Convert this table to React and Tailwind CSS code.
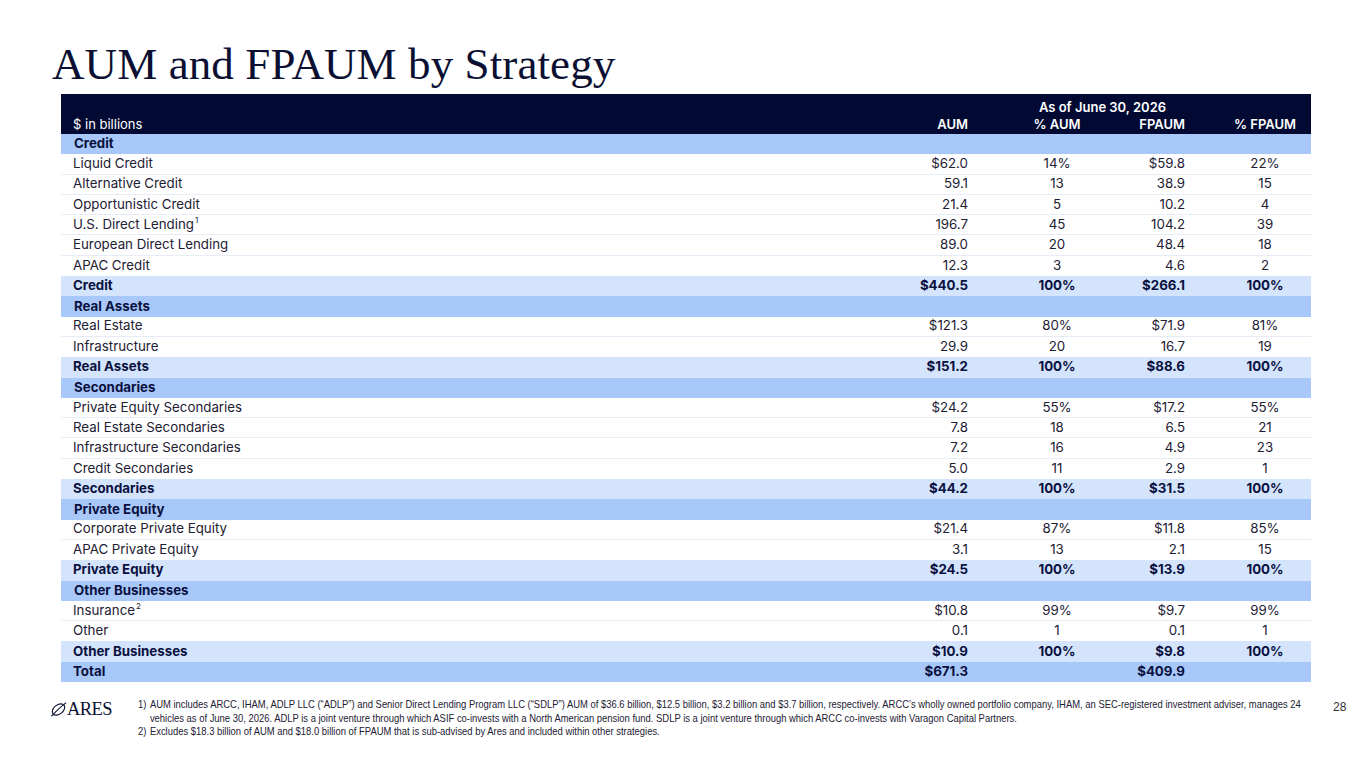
import React from "react";

const sections = [
  {
    name: "Credit",
    rows: [
      ["Liquid Credit", "$62.0", "14%", "$59.8", "22%"],
      ["Alternative Credit", "59.1", "13", "38.9", "15"],
      ["Opportunistic Credit", "21.4", "5", "10.2", "4"],
      ["U.S. Direct Lending", "196.7", "45", "104.2", "39", "1"],
      ["European Direct Lending", "89.0", "20", "48.4", "18"],
      ["APAC Credit", "12.3", "3", "4.6", "2"],
    ],
    total: ["Credit", "$440.5", "100%", "$266.1", "100%"],
  },
  {
    name: "Real Assets",
    rows: [
      ["Real Estate", "$121.3", "80%", "$71.9", "81%"],
      ["Infrastructure", "29.9", "20", "16.7", "19"],
    ],
    total: ["Real Assets", "$151.2", "100%", "$88.6", "100%"],
  },
  {
    name: "Secondaries",
    rows: [
      ["Private Equity Secondaries", "$24.2", "55%", "$17.2", "55%"],
      ["Real Estate Secondaries", "7.8", "18", "6.5", "21"],
      ["Infrastructure Secondaries", "7.2", "16", "4.9", "23"],
      ["Credit Secondaries", "5.0", "11", "2.9", "1"],
    ],
    total: ["Secondaries", "$44.2", "100%", "$31.5", "100%"],
  },
  {
    name: "Private Equity",
    rows: [
      ["Corporate Private Equity", "$21.4", "87%", "$11.8", "85%"],
      ["APAC Private Equity", "3.1", "13", "2.1", "15"],
    ],
    total: ["Private Equity", "$24.5", "100%", "$13.9", "100%"],
  },
  {
    name: "Other Businesses",
    rows: [
      ["Insurance", "$10.8", "99%", "$9.7", "99%", "2"],
      ["Other", "0.1", "1", "0.1", "1"],
    ],
    total: ["Other Businesses", "$10.9", "100%", "$9.8", "100%"],
  },
];

function Cells({ r, bold }) {
  return (
    <>
      <div className={`flex-1 ${bold ? "font-bold text-[#0a1140]" : "text-[#1d2033]"}`}>
        {r[0]}
        {r[5] && <sup className="text-[8px] ml-[1px] -top-[0.7em]">{r[5]}</sup>}
      </div>
      <div className="w-[68px] text-right">{r[1]}</div>
      <div className="w-[42px]" />
      <div className="w-[94px] text-center">{r[2]}</div>
      <div className="w-[81px] text-right">{r[3]}</div>
      <div className="w-[40px]" />
      <div className="w-[80px] text-center">{r[4]}</div>
    </>
  );
}

function AresLogo() {
  return (
    <div className="flex items-center text-[#0b1033]">
      <svg width="17" height="15" viewBox="0 0 17 15">
        <ellipse cx="8.5" cy="7.5" rx="7" ry="4.6" transform="rotate(-38 8.5 7.5)" fill="none" stroke="#0b1033" strokeWidth="1.1" />
        <path d="M1.2 14.2 C 5 10.5, 9.5 5.5, 16.2 0.6" fill="none" stroke="#0b1033" strokeWidth="1.1" />
      </svg>
      <span className="text-[18.5px] leading-none tracking-[-0.6px]" style={{ fontFamily: "'Liberation Serif', serif" }}>
        ARES
      </span>
    </div>
  );
}

export default function App() {
  return (
    <div
      className="w-[1365px] h-[768px] bg-white relative overflow-hidden"
      style={{ fontFamily: "Inter, 'Liberation Sans', sans-serif" }}
    >
      <h1
        className="absolute left-[52px] top-[35px] text-[45px] leading-[58px] text-[#0b1033] tracking-[0.1px]"
        style={{ fontFamily: "'Liberation Serif', 'DejaVu Serif', serif" }}
      >
        AUM and FPAUM by Strategy
      </h1>

      <div className="absolute left-[61px] top-[94px] w-[1250px] text-[13.3px]">
        <div className="bg-[#020a33] text-white h-[40px] pl-[12px] pr-[6px] flex flex-col text-[13px]">
          <div className="flex h-[21px] items-end">
            <div className="flex-1" />
            <div className="w-[405px] text-center font-semibold leading-[16px]">As of June 30, 2026</div>
          </div>
          <div className="flex items-center h-[19px] font-semibold">
            <div className="flex-1 font-normal">$ in billions</div>
            <div className="w-[68px] text-right">AUM</div>
            <div className="w-[42px]" />
            <div className="w-[94px] text-center">% AUM</div>
            <div className="w-[81px] text-right">FPAUM</div>
            <div className="w-[40px]" />
            <div className="w-[80px] text-center">% FPAUM</div>
          </div>
        </div>

        {sections.map((s) => (
          <div key={s.name}>
            <div className="bg-[#a7c8f9] h-[20.3px] flex items-center pl-[13px] pr-[6px] font-bold text-[#0a1140]">
              {s.name}
            </div>
            {s.rows.map((r, i) => (
              <div
                key={r[0]}
                className={`h-[20.3px] flex items-center pl-[12px] pr-[6px] text-[#1d2033] ${
                  i < s.rows.length - 1 ? "border-b border-[#e6edf7]" : ""
                }`}
              >
                <Cells r={r} />
              </div>
            ))}
            <div className="bg-[#d4e4fc] h-[20.3px] flex items-center pl-[12px] pr-[6px] font-bold text-[#0a1140]">
              <Cells r={s.total} bold />
            </div>
          </div>
        ))}
        <div className="bg-[#a7c8f9] h-[20.3px] flex items-center pl-[12px] pr-[6px] font-bold text-[#0a1140]">
          <Cells r={["Total", "$671.3", "", "$409.9", ""]} bold />
        </div>
      </div>

      <div className="absolute left-[50px] top-[700px]">
        <AresLogo />
      </div>

      <div
        className="absolute left-[138px] top-[698px] text-[11.5px] leading-[13.5px] text-[#1d2033] whitespace-nowrap scale-x-[0.82] origin-top-left"
        style={{ fontFamily: "'Liberation Sans', Arial, sans-serif" }}
      >
        <div className="flex">
          <span className="w-[14.5px] shrink-0">1)</span>
          <span>
            AUM includes ARCC, IHAM, ADLP LLC (“ADLP”) and Senior Direct Lending Program LLC (“SDLP”) AUM of $36.6 billion, $12.5 billion, $3.2 billion and $3.7 billion, respectively. ARCC’s wholly owned portfolio company, IHAM, an SEC-registered investment adviser, manages 24
            <br />
            vehicles as of June 30, 2026. ADLP is a joint venture through which ASIF co-invests with a North American pension fund. SDLP is a joint venture through which ARCC co-invests with Varagon Capital Partners.
          </span>
        </div>
        <div className="flex">
          <span className="w-[14.5px] shrink-0">2)</span>
          <span>Excludes $18.3 billion of AUM and $18.0 billion of FPAUM that is sub-advised by Ares and included within other strategies.</span>
        </div>
      </div>

      <div
        className="absolute left-[1333px] top-[698px] text-[12px] text-[#333]"
        style={{ fontFamily: "'Liberation Sans', sans-serif" }}
      >
        28
      </div>
    </div>
  );
}
